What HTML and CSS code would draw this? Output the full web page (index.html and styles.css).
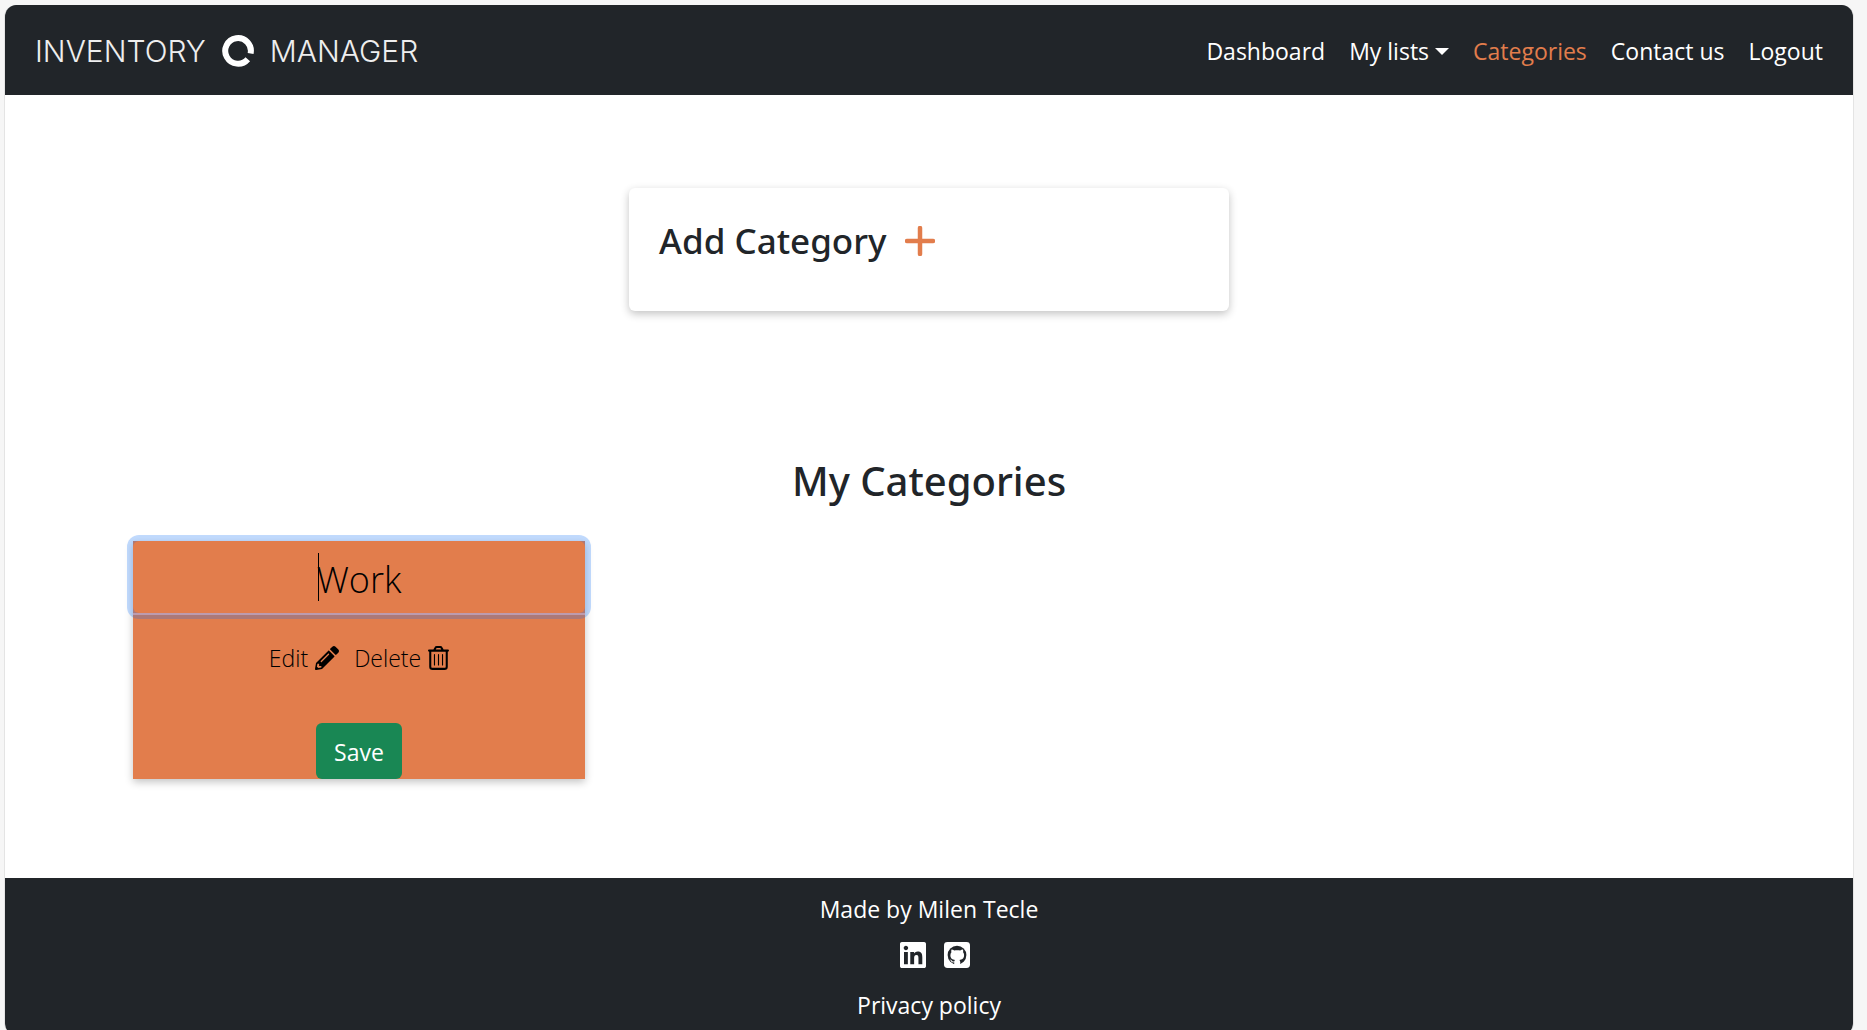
FILE: index.html
```html
<!DOCTYPE html>
<html lang="en">
<head>
<meta charset="utf-8">
<meta name="viewport" content="width=device-width, initial-scale=1">
<title>Inventory Manager - Categories</title>
<link rel="stylesheet" href="styles.css">
</head>
<body>
<div class="page">
  <header class="navbar">
    <a class="brand" href="#">
      <span>INVENTORY</span>
      <svg class="brand-ring" viewBox="0 0 32 32" aria-hidden="true"><path d="M28.600 18.500A12.800 12.800 0 1 0 25.800 24.200" fill="none" stroke="#fff" stroke-width="6"/></svg>
      <span>MANAGER</span>
    </a>
    <nav class="nav-links">
      <a href="#">Dashboard</a>
      <button type="button" class="dropdown">My lists</button>
      <a href="#" class="active">Categories</a>
      <a href="#">Contact us</a>
      <a href="#">Logout</a>
    </nav>
  </header>

  <main>
    <section class="add-card">
      <h2>Add Category</h2>
      <button type="button" class="plus" aria-label="Add category">
        <svg viewBox="0 0 30 30" aria-hidden="true"><path d="M15 2v26M2 15h26" stroke="currentColor" stroke-width="4.500" stroke-linecap="round"/></svg>
      </button>
    </section>

    <h1>My Categories</h1>

    <section class="category-grid">
      <form class="category">
        <div class="name-field">
          <input type="text" value="Work" aria-label="Category name">
          <span class="cursor"></span>
        </div>
        <div class="actions">
          <button type="button">Edit
            <svg class="icon" viewBox="0 0 512 512" aria-hidden="true"><path fill="currentColor" d="M497.900 142.100l-46.100 46.100c-4.700 4.700-12.300 4.700-17 0l-111-111c-4.700-4.700-4.700-12.300 0-17l46.100-46.100c18.700-18.700 49.100-18.700 67.900 0l60.100 60.100c18.800 18.700 18.800 49.100 0 67.900zM284.200 99.800L21.600 362.400.4 483.900c-2.900 16.400 11.400 30.600 27.800 27.800l121.500-21.300 262.600-262.600c4.700-4.700 4.700-12.300 0-17l-111-111c-4.800-4.700-12.400-4.700-17.100 0zM124.100 339.900c-5.500-5.500-5.500-14.300 0-19.800l154-154c5.500-5.500 14.300-5.500 19.800 0s5.500 14.300 0 19.800l-154 154c-5.500 5.500-14.300 5.500-19.800 0zM88 424h48v36.300l-64.500 11.300-31.100-31.100L51.700 376H88v48z"/></svg>
          </button>
          <button type="button">Delete
            <svg class="icon trash" viewBox="0 0 448 512" aria-hidden="true"><path fill="none" stroke="currentColor" stroke-width="44" stroke-linejoin="round" stroke-linecap="round" d="M22 98h404M132 90l28-52q8-16 26-16h76q18 0 26 16l28 52M48 100v340q0 48 48 48h256q48 0 48-48V100"/><path fill="none" stroke="currentColor" stroke-width="24" stroke-linecap="round" d="M138 184v220M224 184v220M310 184v220"/></svg>
          </button>
        </div>
        <button type="submit" class="save">Save</button>
      </form>
    </section>
  </main>

  <footer>
    <p>Made by Milen Tecle</p>
    <div class="social">
      <a href="#" aria-label="LinkedIn"><svg viewBox="0 0 448 448" aria-hidden="true"><path fill="currentColor" d="M416 0H31.900C14.300 0 0 14.500 0 32.300v383.400C0 433.500 14.300 448 31.900 448H416c17.600 0 32-14.500 32-32.300V32.300C448 14.500 433.600 0 416 0zM135.400 384H69V170.200h66.500V384zm-33.200-243c-21.300 0-38.500-17.300-38.500-38.500S80.900 64 102.200 64c21.200 0 38.500 17.300 38.500 38.500 0 21.300-17.200 38.500-38.500 38.500zm282.100 243h-66.400V280c0-24.800-.5-56.700-34.500-56.700-34.600 0-39.900 27-39.900 54.900V384h-66.400V170.200h63.700v29.200h.9c8.900-16.800 30.600-34.500 62.900-34.500 67.200 0 79.700 44.300 79.700 101.900V384z"/></svg></a>
      <a href="#" aria-label="GitHub"><svg viewBox="0 0 448 448" aria-hidden="true"><rect width="448" height="448" rx="60" fill="currentColor"/><circle cx="224" cy="226" r="162" class="cut"/><path fill="currentColor" d="M176 400v-50c-28 6-48-2-59-25-6-12-12-18-22-24 24-4 36 11 46 26 9 12 22 13 36 7 2-12 7-20 13-25-44-6-80-24-80-82 0-22 7-38 18-51-4-12-5-30 2-47 17 0 32 8 47 18 33-9 69-9 102 0 15-10 30-18 47-18 7 17 6 35 2 47 11 13 18 29 18 51 0 58-36 76-80 82 8 7 14 20 14 40v51z"/></svg></a>
    </div>
    <a href="#">Privacy policy</a>
  </footer>
</div>
</body>
</html>
```
FILE: styles.css
```css
* { box-sizing: border-box; }

body {
  margin: 0;
  padding: 5px 13px 0 4px;
  background: #f6f6f6;
  color: #212529;
  font: 23px/36px "Open Sans", "Noto Sans", sans-serif;
}

h1, h2, p { margin: 0; }
a { color: inherit; text-decoration: none; }
svg { display: block; }
button {
  padding: 0;
  border: 0;
  background: none;
  color: inherit;
  font: inherit;
}

.page {
  border: solid #e4e4e4;
  border-width: 0 1px;
  border-radius: 12px;
  background: #fff;
  overflow: hidden;
}

.navbar {
  display: flex;
  align-items: center;
  justify-content: space-between;
  min-height: 90px;
  padding: 2px 30px 0;
  background: #212529;
  color: #fff;
}

.brand {
  display: flex;
  align-items: center;
  gap: 16px;
  color: #eee;
  font: 300 30px/36px Inter, sans-serif;
}
.brand-ring { width: 32px; height: 32px; }

.nav-links { display: flex; gap: 24px; }
.nav-links .active { color: #e27d4c; }
.dropdown { display: flex; align-items: center; gap: 6px; }
.dropdown::after {
  content: "";
  border: solid transparent;
  border-width: 7px 7px 0;
  border-top-color: #fff;
}

main { padding: 93px 128px 99px; }

.add-card {
  display: flex;
  align-items: flex-start;
  gap: 18px;
  width: 600px;
  max-width: 100%;
  min-height: 123px;
  margin: 0 auto;
  padding: 30px;
  border-radius: 6px;
  box-shadow: 0 3px 8px rgba(0, 0, 0, .24);
}
h1, h2 { font-family: "Noto Sans", "Open Sans", sans-serif; font-weight: 500; }
h2 { font-size: 35px; line-height: 46px; }
.plus { padding-top: 8px; color: #e27d4c; }
.plus svg { width: 30px; height: 30px; }

h1 {
  margin-top: 142px;
  font-size: 40px;
  line-height: 56px;
  text-align: center;
}

.category-grid {
  display: grid;
  grid-template-columns: repeat(auto-fill, 452px);
  margin-top: 32px;
}
.category {
  display: flex;
  flex-direction: column;
  align-items: center;
  background: #e27d4c;
  color: #000;
  box-shadow: 0 3px 8px rgba(0, 0, 0, .24);
}
.name-field {
  position: relative;
  width: 100%;
  border-bottom: 2px solid #f8aa94;
}
.name-field input {
  position: relative;
  display: block;
  width: 100%;
  height: 72px;
  padding: 4px 20px 0;
  border: 0;
  border-radius: 6px;
  outline: 0;
  background: #e27d4c;
  box-shadow: 0 0 0 6px rgba(13, 110, 253, .25);
  color: #000;
  font: 300 36px/48px "Open Sans", "Noto Sans", sans-serif;
  text-align: center;
}
.cursor {
  position: absolute;
  top: 12px;
  left: calc(50% - 41px);
  width: 1px;
  height: 48px;
  background: #000;
}
.actions { display: flex; gap: 15px; margin-top: 25px; font-weight: 300; }
.actions button { display: flex; align-items: center; gap: 7px; }
.icon { width: 24px; height: 24px; }
.trash { width: 21px; }
.save {
  height: 56px;
  margin-top: 47px;
  padding: 2px 18px 0;
  border-radius: 6px;
  background: #198754;
  color: #fff;
}

footer {
  display: flex;
  flex-direction: column;
  align-items: center;
  padding: 13px 0 12px;
  background: #212529;
  color: #fff;
}
.social { display: flex; gap: 18px; padding: 15px 0 19px 12px; }
.social svg { width: 26px; height: 26px; }
.cut { fill: #212529; }
```
